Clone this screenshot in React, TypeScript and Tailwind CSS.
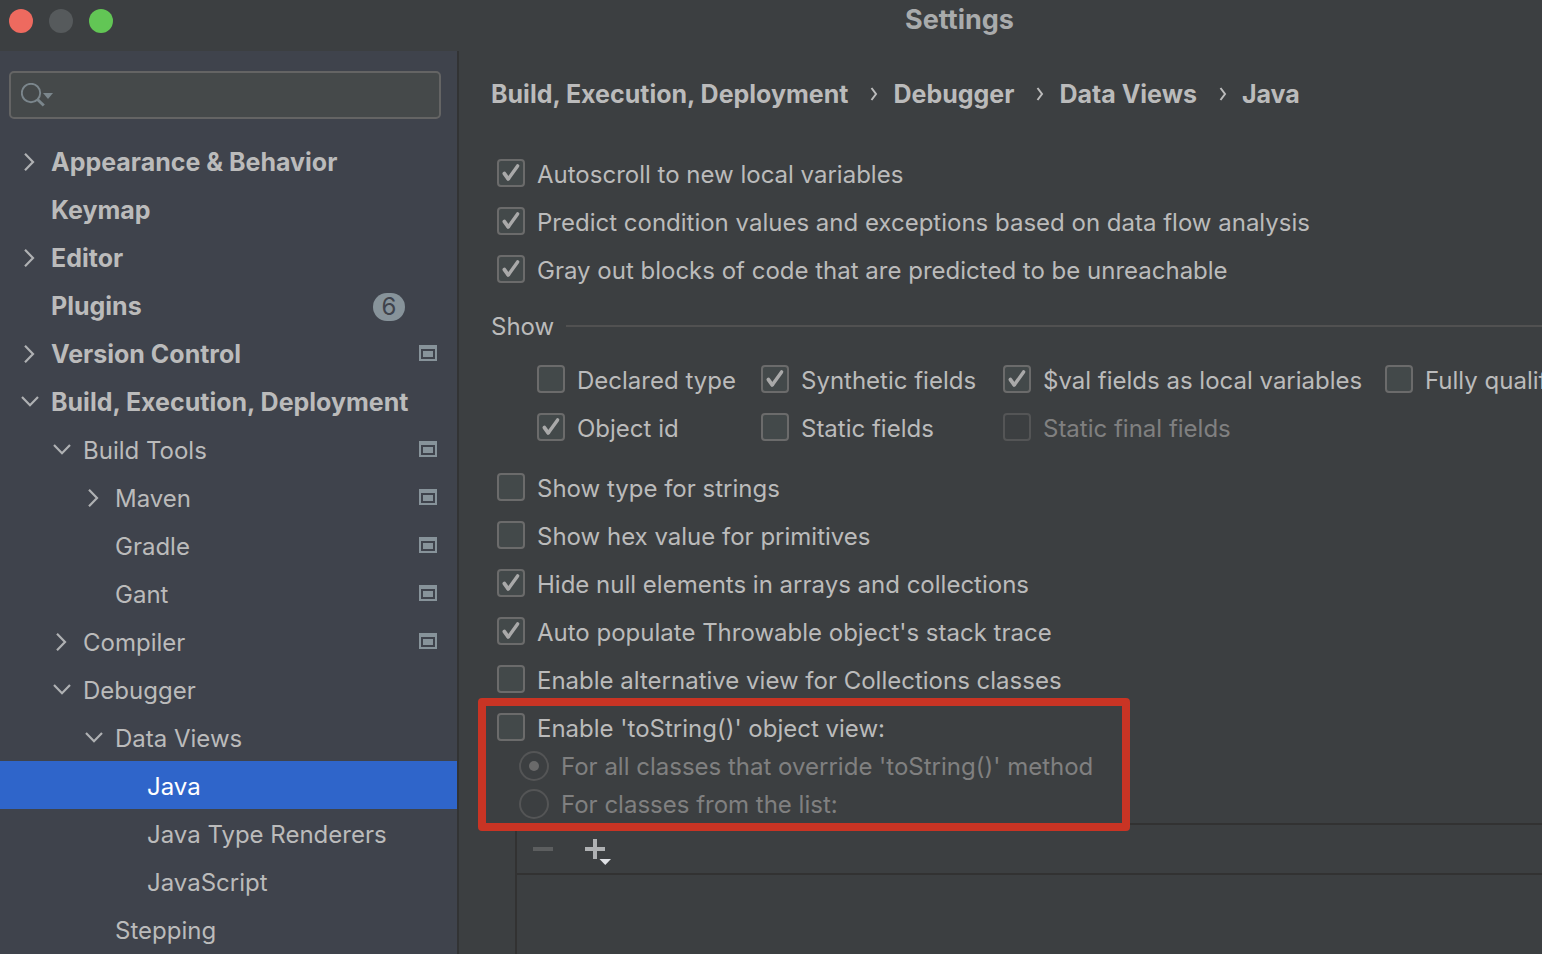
import { useState } from "react";

type TreeItem = {
  label: string;
  level: number;
  state?: "open" | "closed";
  bold?: boolean;
  badge?: string;
  project?: boolean;
};

const tree: TreeItem[] = [
  { label: "Appearance & Behavior", level: 0, state: "closed", bold: true },
  { label: "Keymap", level: 0, bold: true },
  { label: "Editor", level: 0, state: "closed", bold: true },
  { label: "Plugins", level: 0, bold: true, badge: "6" },
  { label: "Version Control", level: 0, state: "closed", bold: true, project: true },
  { label: "Build, Execution, Deployment", level: 0, state: "open", bold: true },
  { label: "Build Tools", level: 1, state: "open", project: true },
  { label: "Maven", level: 2, state: "closed", project: true },
  { label: "Gradle", level: 2, project: true },
  { label: "Gant", level: 2, project: true },
  { label: "Compiler", level: 1, state: "closed", project: true },
  { label: "Debugger", level: 1, state: "open" },
  { label: "Data Views", level: 2, state: "open" },
  { label: "Java", level: 3 },
  { label: "Java Type Renderers", level: 3 },
  { label: "JavaScript", level: 3 },
  { label: "Stepping", level: 2 },
];

const indent = ["pl-[17px]", "pl-[49px]", "pl-[81px]", "pl-[113px]"];

function Chevron({ state }: { state?: "open" | "closed" }) {
  return (
    <svg viewBox="0 0 24 24" className="size-6 shrink-0" fill="none" stroke="#afb1b3" strokeWidth="2.2" aria-hidden="true">
      {state === "closed" && <path d="M8 4.8 16 13l-8 8.2" />}
      {state === "open" && <path d="M5 8 13 16.200l8-8.200" />}
    </svg>
  );
}

function ProjectIcon() {
  return (
    <svg viewBox="0 0 18 16" className="h-4 w-[18px] shrink-0" fill="#87939a" aria-hidden="true">
      <path fillRule="evenodd" d="M0 0h18v16H0zM2 4v10h14V4z" />
      <path d="M4 6h10v6H4z" />
    </svg>
  );
}

function Check({ label, checked = false, disabled = false }: { label: string; checked?: boolean; disabled?: boolean }) {
  return (
    <label className={`flex h-12 items-center gap-3 whitespace-nowrap ${disabled ? "text-[#808080]" : ""}`}>
      <span className="grid shrink-0">
        <input
          type="checkbox"
          defaultChecked={checked}
          disabled={disabled}
          className="peer col-start-1 row-start-1 size-7 appearance-none rounded border-2 border-[#6b6b6b] bg-[#43494a] disabled:border-[#545556] disabled:bg-transparent"
        />
        <svg
          viewBox="0 0 28 28"
          className="pointer-events-none invisible col-start-1 row-start-1 size-7 peer-checked:visible"
          fill="none"
          stroke="#a9a9a9"
          strokeLinecap="round"
          aria-hidden="true"
        >
          <path d="m7.4 14.6 3.8 5.2" strokeWidth="3.8" />
          <path d="m11.4 19.8 9.2-12.9" strokeWidth="3.4" />
        </svg>
      </span>
      <span className="pt-1">{label}</span>
    </label>
  );
}

function Radio({ label, checked = false }: { label: string; checked?: boolean }) {
  return (
    <label className="flex h-[38px] items-center gap-3 text-[#808080]">
      <span className="grid shrink-0 place-items-center">
        <input
          type="radio"
          name="to-string-scope"
          defaultChecked={checked}
          disabled
          className="peer col-start-1 row-start-1 size-[30px] appearance-none rounded-full border-2 border-[#545556]"
        />
        <span className="invisible col-start-1 row-start-1 size-[10px] rounded-full bg-[#6a6a6a] peer-checked:visible" />
      </span>
      <span className="pt-[2px]">{label}</span>
    </label>
  );
}

export default function App() {
  const [selected, setSelected] = useState("Java");
  const path = ["Build, Execution, Deployment", "Debugger", "Data Views", "Java"];

  return (
    <div className="flex h-screen flex-col overflow-hidden bg-[#3c3f41] font-['Inter',sans-serif] text-[24px] leading-8 text-[#bbbbbb]">
      <header className="flex h-[51px] shrink-0 items-start">
        <div className="flex flex-1 gap-4 pt-[9px] pl-[9px]">
          <button aria-label="Close" className="size-6 rounded-full bg-[#ee6a5f]" />
          <button aria-label="Minimize" className="size-6 rounded-full bg-[#565a5c]" />
          <button aria-label="Zoom" className="size-6 rounded-full bg-[#62c655]" />
        </div>
        <h1 className="mr-[528px] pt-1 text-[27px] leading-8 font-bold text-[#a9abac]">Settings</h1>
      </header>

      <div className="flex min-h-0 flex-1">
        <aside className="w-[459px] shrink-0 overflow-hidden border-r-2 border-[#323334] bg-[#3f434c] pt-5">
          <div className="mr-4 ml-[9px] flex h-12 items-center rounded-[5px] border-2 border-[#646464] bg-[#45494a] pl-[10px]">
            <svg viewBox="0 0 32 24" className="h-6 w-8 shrink-0" fill="none" aria-hidden="true">
              <circle cx="10" cy="10" r="9.2" stroke="#7b868c" strokeWidth="1.9" />
              <path d="m16.5 16.5 6.3 6" stroke="#7b868c" strokeWidth="3" />
              <path d="M22 10h10l-5 6z" fill="#7b868c" />
            </svg>
            <input type="search" aria-label="Search settings" className="min-w-0 flex-1 bg-transparent px-2 outline-none" />
          </div>

          <nav className="mt-[18px]">
            {tree.map((item) => (
              <button
                key={item.label}
                onClick={() => setSelected(item.label)}
                className={`flex h-12 w-full items-center pr-5 text-left whitespace-nowrap ${indent[item.level]} ${
                  item.bold ? "text-[25px] font-bold" : ""
                } ${selected === item.label ? "bg-[#2f65ca] text-white" : ""}`}
              >
                <Chevron state={item.state} />
                <span className={`flex-1 pl-[10px] ${item.bold ? "pt-[2px]" : "pt-1"}`}>{item.label}</span>
                {item.badge && (
                  <span className="mt-1 mr-8 h-7 w-8 rounded-full bg-[#87939a] text-center text-[24px] leading-7 font-normal text-[#3f434c]">
                    {item.badge}
                  </span>
                )}
                {item.project && <ProjectIcon />}
              </button>
            ))}
          </nav>
        </aside>

        <main className="flex min-w-0 flex-1 flex-col overflow-hidden pt-[27px] pl-8">
          <nav aria-label="Breadcrumb" className="flex shrink-0 items-center text-[25px] font-bold whitespace-nowrap">
            {path.map((part, i) => (
              <span key={part} className="flex items-center">
                {i > 0 && (
                  <svg viewBox="0 0 8 14" className="mr-[15px] ml-[22px] h-[14px] w-2" fill="none" stroke="#bbbbbb" strokeWidth="2" aria-hidden="true">
                    <path d="M1.5 1 6 7l-4.500 6" />
                  </svg>
                )}
                <a href="#" className="block">{part}</a>
              </span>
            ))}
          </nav>

          <div className="mt-[39px] shrink-0 pl-[6px]">
            <Check label="Autoscroll to new local variables" checked />
            <Check label="Predict condition values and exceptions based on data flow analysis" checked />
            <Check label="Gray out blocks of code that are predicted to be unreachable" checked />
          </div>

          <section className="mt-4 shrink-0">
            <div className="flex items-center gap-3">
              <h2 className="pt-[2px]">Show</h2>
              <div className="h-[2px] flex-1 bg-[#515151]" />
            </div>
            <div className="mt-3 grid grid-cols-[224px_242px_382px_1fr] pl-[46px]">
              <Check label="Declared type" />
              <Check label="Synthetic fields" checked />
              <Check label="$val fields as local variables" checked />
              <Check label="Fully qualified names" />
              <Check label="Object id" checked />
              <Check label="Static fields" />
              <Check label="Static final fields" disabled />
            </div>
          </section>

          <div className="mt-3 shrink-0 pl-[6px]">
            <Check label="Show type for strings" />
            <Check label="Show hex value for primitives" />
            <Check label="Hide null elements in arrays and collections" checked />
            <Check label="Auto populate Throwable object's stack trace" checked />
            <Check label="Enable alternative view for Collections classes" />
          </div>

          <div className="relative shrink-0 pl-[6px]">
            <div className="pointer-events-none absolute -top-[5px] -left-[13px] z-10 h-[133px] w-[652px] rounded border-8 border-[#c93424]" />
            <Check label="Enable 'toString()' object view:" />
            <div className="-mt-1 pl-[22px]">
              <Radio label="For all classes that override 'toString()' method" checked />
              <Radio label="For classes from the list:" />
            </div>
          </div>

          <div className="ml-6 flex min-h-0 flex-1 flex-col border-t-2 border-l-2 border-[#323232]">
            <div className="flex h-[50px] shrink-0 items-center gap-6 border-b-2 border-[#323232] pl-3">
              <button aria-label="Remove" disabled>
                <svg viewBox="0 0 28 28" className="size-7" fill="#5c5e5f" aria-hidden="true">
                  <path d="M4 12h20v4H4z" />
                </svg>
              </button>
              <button aria-label="Add">
                <svg viewBox="0 0 28 28" className="size-7 overflow-visible" aria-hidden="true">
                  <path d="M12 4h4v8h8v4h-8v8h-4v-8H4v-4h8z" fill="#afb1b3" />
                  <path d="M18.5 24h11.500l-5.750 6z" fill="#dfe1e5" />
                </svg>
              </button>
            </div>
          </div>
        </main>
      </div>
    </div>
  );
}
